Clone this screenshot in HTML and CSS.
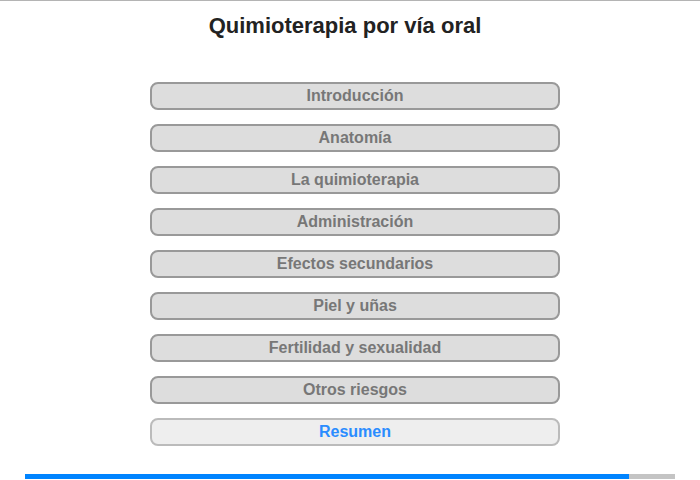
FILE: index.html
```
<!DOCTYPE html>
<html lang="es">
<head>
<meta charset="utf-8">
<link rel="stylesheet" href="styles.css">
</head>
<body>
<div class="page">
  <h1 class="title">Quimioterapia por vía oral</h1>
  <nav class="menu">
    <a class="item">Introducción</a>
    <a class="item">Anatomía</a>
    <a class="item">La quimioterapia</a>
    <a class="item">Administración</a>
    <a class="item">Efectos secundarios</a>
    <a class="item">Piel y uñas</a>
    <a class="item">Fertilidad y sexualidad</a>
    <a class="item">Otros riesgos</a>
    <a class="item current">Resumen</a>
  </nav>
  <div class="progress"><div class="fill" style="width:604px"></div></div>
</div>
</body>
</html>
```
FILE: styles.css
```
html, body { margin: 0; padding: 0; background: #fff; }
body { font-family: "Liberation Sans", Arial, sans-serif; }
.page {
  width: 700px; height: 480px; box-sizing: border-box;
  border-top: 1px solid #b4b4b4;
  display: flex; flex-direction: column; align-items: center;
}
.title {
  margin: 12px 10px 0 0; font-size: 22px; font-weight: bold; color: #222;
  line-height: 26px; text-align: center;
}
.menu {
  margin: 43px 0 0 10px; display: flex; flex-direction: column; gap: 14px;
}
.item {
  display: block; box-sizing: border-box; width: 410px; height: 28px;
  border: 2px solid #999; border-radius: 8px; background: #ddd;
  color: #777; font-weight: bold; font-size: 16px; line-height: 24px;
  text-align: center;
}
.item.current { background: #eee; border-color: #bbb; color: #2a8cff; }
.progress {
  margin-top: 28px; width: 650px; height: 5px; background: #c4c4c4;
  display: flex;
}
.fill { height: 100%; background: #0084ff; }
```
